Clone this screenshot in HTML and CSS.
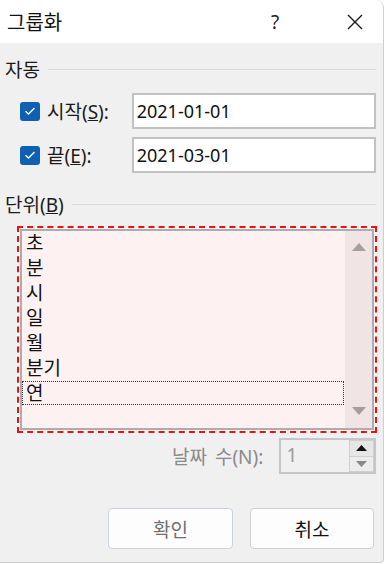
FILE: index.html
```html
<!DOCTYPE html>
<html lang="ko">
<head>
<meta charset="utf-8">
<link rel="stylesheet" href="styles.css">
</head>
<body>
<div class="window">
  <div class="titlebar">
    <span class="title">그룹화</span>
    <span class="help">?</span>
    <span class="close">
      <svg width="16" height="16" viewBox="0 0 16 16"><path d="M1 1 L15 15 M15 1 L1 15" stroke="#1a1a1a" stroke-width="1.4" fill="none"/></svg>
    </span>
  </div>
  <div class="content">
    <div class="group-head"><span>자동</span><span class="rule"></span></div>
    <div class="row first">
      <span class="check"><svg width="12" height="10" viewBox="0 0 12 10"><path d="M1.5 5.2 L4.5 8 L10.5 2" stroke="#fff" stroke-width="1.3" fill="none"/></svg></span>
      <span class="label">시작(<u>S</u>):</span>
      <span class="input">2021-01-01</span>
    </div>
    <div class="row second">
      <span class="check"><svg width="12" height="10" viewBox="0 0 12 10"><path d="M1.5 5.2 L4.5 8 L10.5 2" stroke="#fff" stroke-width="1.3" fill="none"/></svg></span>
      <span class="label">끝(<u>E</u>):</span>
      <span class="input">2021-03-01</span>
    </div>
    <div class="group-head unit"><span>단위(<u>B</u>)</span><span class="rule"></span></div>
    <div class="listwrap">
      <div class="list">
        <div class="items">
          <div class="item">초</div>
          <div class="item">분</div>
          <div class="item">시</div>
          <div class="item">일</div>
          <div class="item">월</div>
          <div class="item">분기</div>
          <div class="item focus">연</div>
        </div>
        <div class="scroll">
          <svg width="14" height="8" viewBox="0 0 14 8"><path d="M0 8 L7 0 L14 8 Z" fill="#a59e9e"/></svg>
          <svg width="14" height="8" viewBox="0 0 14 8"><path d="M0 0 L7 8 L14 0 Z" fill="#a59e9e"/></svg>
        </div>
      </div>
    </div>
    <div class="days">
      <span class="days-label">날짜 수(N):</span>
      <div class="spin">
        <span class="spin-val">1</span>
        <div class="spin-btns">
          <span class="sb up"><svg width="11" height="6" viewBox="0 0 11 6"><path d="M0 6 L5.5 0 L11 6 Z" fill="#111"/></svg></span>
          <span class="sb down"><svg width="11" height="6" viewBox="0 0 11 6"><path d="M0 0 L5.5 6 L11 0 Z" fill="#888"/></svg></span>
        </div>
      </div>
    </div>
    <div class="buttons">
      <span class="btn ok">확인</span>
      <span class="btn cancel">취소</span>
    </div>
  </div>
</div>
</body>
</html>
```
FILE: styles.css
```css
* { box-sizing: border-box; }
html, body { margin: 0; padding: 0; background: #ffffff; }
body {
  width: 387px;
  height: 564px;
  overflow: hidden;
  font-family: "Noto Sans", "Noto Sans CJK KR", sans-serif;
  font-size: 19px;
  color: #1a1a1a;
}
.window {
  width: 384px;
  height: 563px;
  background: #f0f0f0;
  border-right: 1px solid #cfcfcf;
  border-bottom: 1px solid #cfcfcf;
  border-top-right-radius: 8px;
  border-bottom-right-radius: 4px;
  overflow: hidden;
  display: flex;
  flex-direction: column;
}
.titlebar {
  height: 43px;
  background: #ffffff;
  display: flex;
  align-items: center;
  padding-left: 7px;
  flex: none;
}
.title { font-size: 20px; color: #111; width: 258px; }
.help { width: 20px; text-align: center; font-size: 19px; color: #222; }
.close { margin-left: 62px; display: flex; align-items: center; }
.content {
  display: flex;
  flex-direction: column;
  padding: 0 7px 0 5px;
}
.group-head {
  display: flex;
  align-items: center;
  height: 24px;
  margin-top: 14px;
  color: #1a1a1a;
}
.group-head .rule {
  flex: 1;
  height: 1px;
  background: #d9d9d9;
  margin-left: 8px;
}
.group-head.unit { margin-top: 19px; }
.row {
  display: flex;
  align-items: center;
  height: 36px;
  padding-left: 15px;
}
.row.first { margin-top: 12px; }
.row.second { margin-top: 8px; }
.check {
  width: 20px;
  height: 19px;
  border-radius: 3px;
  background: #0f5fb3;
  display: flex;
  align-items: center;
  justify-content: center;
  flex: none;
}
.label { margin-left: 7px; width: 85px; }
.input {
  width: 245px;
  height: 36px;
  background: #fff;
  border: 2px solid #c2c2c2;
  padding-left: 3px;
  display: flex;
  align-items: center;
  color: #111;
  font-size: 18px;
}
.listwrap {
  margin-top: 10px;
  margin-left: 12px;
  width: 360px;
  height: 207px;
  border: 2px dashed #ee1111;
  padding: 1px;
  background: #fdf2f2;
}
.list {
  height: 100%;
  border: 2px solid #adadad;
  background: #fdf1f1;
  display: flex;
}
.items { flex: 1; }
.item {
  height: 25px;
  line-height: 25px;
  padding-left: 4px;
  color: #111;
}
.item.focus {
  height: 24px;
  line-height: 22px;
  border: 1px dotted #333;
  padding-left: 3px;
  margin-right: 1px;
}
.scroll {
  width: 27px;
  background: #f1e4e4;
  display: flex;
  flex-direction: column;
  align-items: center;
  justify-content: space-between;
  padding: 12px 0 13px;
}
.days {
  display: flex;
  align-items: center;
  margin-top: 5px;
  height: 36px;
}
.days-label {
  margin-left: 167px;
  width: 108px;
  color: #8a8a8a;
  word-spacing: 3px;
}
.spin {
  width: 97px;
  height: 36px;
  border: 2px solid #c6c6c6;
  background: #f0f0f0;
  display: flex;
}
.spin-val {
  flex: 1;
  color: #9a9a9a;
  padding-left: 5px;
  line-height: 30px;
}
.spin-btns {
  width: 25px;
  display: flex;
  flex-direction: column;
}
.sb {
  flex: 1;
  display: flex;
  align-items: center;
  justify-content: center;
  background: #e6e6e6;
  border: 1px solid #cfcfcf;
}
.sb.down { border-top: none; background: #ececec; }
.buttons {
  display: flex;
  gap: 17px;
  margin-top: 34px;
  padding-left: 103px;
}
.btn {
  width: 125px;
  height: 41px;
  border-radius: 4px;
  background: #fdfdfd;
  border: 1px solid #d0d0d0;
  display: flex;
  align-items: center;
  justify-content: center;
  color: #111;
}
.btn.ok { color: #6f6f6f; border-color: #c5d3e3; }
.btn.cancel { width: 124px; }
```
